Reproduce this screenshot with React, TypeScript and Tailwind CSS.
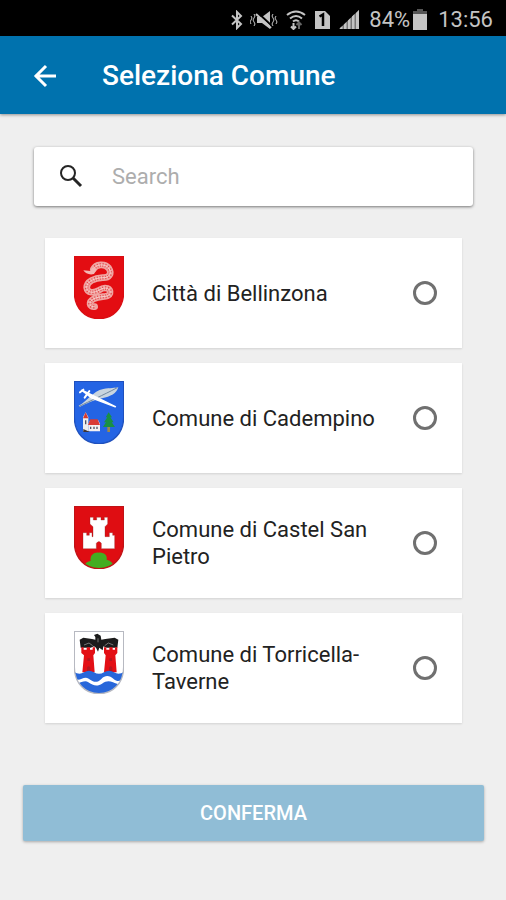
import { useState } from 'react';
import type { ReactNode } from 'react';

const SHIELD = 'M1 1H149V108C149 158 116 188 75 188S1 158 1 108Z';

function Shield({ id, fill, stroke, children }: { id: string; fill: string; stroke: string; children: ReactNode }) {
  return (
    <svg viewBox="0 0 150 189" className="h-[63px] w-[50px] shrink-0" aria-hidden="true">
      <clipPath id={id}>
        <path d={SHIELD} />
      </clipPath>
      <g clipPath={`url(#${id})`}>
        <path d={SHIELD} fill={fill} />
        {children}
      </g>
      <path d={SHIELD} fill="none" stroke={stroke} strokeWidth="4" />
    </svg>
  );
}

function BellinzonaShield() {
  const body =
    'M58 40C66 24 92 22 104 36C116 54 104 66 86 65C62 66 38 76 38 95C40 112 60 112 76 102C94 90 112 98 108 112C104 126 80 118 60 128C42 138 46 154 62 152';
  return (
    <Shield id="bellinzona" fill="#e30d12" stroke="#d90d12">
      <path d={body} fill="none" stroke="#f0a5a2" strokeWidth="20" strokeLinecap="round" strokeLinejoin="round" />
      <path d={body} fill="none" stroke="#e3474a" strokeWidth="11" strokeDasharray="3 5" />
      <path d={body} fill="none" stroke="#f8cfcb" strokeWidth="3" />
      <path d="M28 43L50 45L54 34L68 40L60 54C46 58 34 52 28 43Z" fill="#f3b7b4" />
      <path d="M66 52L88 50L84 44Z" fill="#e30d12" />
    </Shield>
  );
}

function CadempinoShield() {
  return (
    <Shield id="cadempino" fill="#2464e4" stroke="#1f50bd">
      <path d="M14 74C42 60 56 30 88 24C108 20 124 22 133 18C128 38 110 46 84 52C56 58 38 68 18 77Z" fill="#c9d5df" />
      <path d="M16 76C48 60 84 44 130 20" fill="none" stroke="#71889f" strokeWidth="3" />
      <path d="M24 28L124 77L52 50Z" fill="#fff" stroke="#fff" strokeWidth="5" strokeLinejoin="round" />
      <path d="M18 34L28 26M32 50L46 30" stroke="#fff" strokeWidth="6" strokeLinecap="round" />
      <path d="M27 108L35 94L43 108V151H27Z" fill="#eee" />
      <path d="M27 112L35 94L43 112Z" fill="#d7392f" />
      <path d="M43 129L49 117H72L78 128V151H43Z" fill="#f4f1f2" />
      <path d="M42 132L49 115H71L78 132Z" fill="#d93a35" />
      <path d="M50 137V144M60 137V144M69 137V144M35 118V130" stroke="#4e5264" strokeWidth="4" />
      <path d="M28 144L48 153H28Z" fill="#3f3435" />
      <path d="M104 132V153" stroke="#a08a48" strokeWidth="8" />
      <path d="M104 94L114 109H109L119 124H113L123 138H87L96 124H90L100 109H95Z" fill="#199044" />
    </Shield>
  );
}

function CastelShield() {
  return (
    <Shield id="castel" fill="#df0d12" stroke="#c01216">
      <path
        d="M48 34H58V42H68V34H81V42H91V34H101V54L93 62V92H106V80H116V88H122V128H82V112Q75 101 67 112V128H27V80H38V88H46V80H54V92H57V62L48 54Z"
        fill="#fff"
        stroke="#8d2724"
        strokeWidth="1"
      />
      <path d="M31 189C29 174 39 166 50 165C47 147 61 138 74 140C91 138 101 150 98 161C111 163 120 174 120 189Z" fill="#43ad21" />
    </Shield>
  );
}

function TorricellaShield() {
  return (
    <Shield id="torricella" fill="#fff" stroke="#b7b9c1">
      <path
        d="M17 26L28 20L54 24L64 26L64 18L60 12L70 8L80 14L82 26L94 24L122 20L133 26L130 50H98L88 46L86 58L76 50L72 62L66 50L60 46L50 50H20Z"
        fill="#1b1b1b"
      />
      <path d="M30 42L45 36L56 44M92 44L103 36L118 42M72 22V34" fill="none" stroke="#777" strokeWidth="3" />
      <path d="M22 49H29V56H38V49H48V56H56V49H63V66L58 73L62 124H25L30 73L22 66Z" fill="#e30f15" />
      <path d="M90 49H97V56H106V49H116V56H123V49H130V66L124 73L128 124H90L95 73L90 66Z" fill="#e30f15" />
      <path d="M40 82H48V90H40ZM106 82H114V90H106ZM39 124V110Q44 102 49 110V124ZM105 124V110Q110 102 115 110V124Z" fill="#b5161f" />
      <path d="M0 122Q15 133 30 124T60 124T90 124T120 124T150 122V189H0Z" fill="#2867da" />
      <path d="M0 142C17 155 29 132 44 143S69 157 82 144S107 134 119 144S138 151 150 142V154C138 163 129 159 117 154S97 149 84 158S56 164 43 154S18 162 0 154Z" fill="#fff" />
    </Shield>
  );
}

const comuni = [
  { id: 'bellinzona', name: 'Città di Bellinzona', shield: <BellinzonaShield /> },
  { id: 'cadempino', name: 'Comune di Cadempino', shield: <CadempinoShield /> },
  { id: 'castel', name: 'Comune di Castel San Pietro', shield: <CastelShield /> },
  { id: 'torricella', name: 'Comune di Torricella-Taverne', shield: <TorricellaShield /> },
];

function StatusBar() {
  return (
    <div className="flex h-9 items-center justify-end bg-black pt-1 pr-3 text-[#c4c4c4]">
      <svg viewBox="0 0 14 20" className="mr-1.5 h-5 w-3.5" fill="none" stroke="currentColor" strokeWidth="2" aria-hidden="true">
        <path d="M2 5.5L11 14L7 18V2L11 6L2 14.5" />
      </svg>
      <svg viewBox="0 0 28 20" className="mr-2 h-5 w-7" fill="currentColor" aria-hidden="true">
        <path d="M7 7H12L20 1V19L12 13H7Z" />
        <path d="M7 2L22 16" stroke="#000" strokeWidth="2" />
        <path d="M6 4L21 18" stroke="currentColor" strokeWidth="2" />
        <path
          d="M4 4Q6 6 4 8T4 12T4 16M1 6Q3 8 1 10T1 14M23 4Q21 6 23 8T23 12T23 16M26 6Q24 8 26 10T26 14"
          fill="none"
          stroke="currentColor"
        />
      </svg>
      <svg viewBox="0 0 20 20" className="mr-2 h-5 w-5" fill="none" stroke="currentColor" strokeWidth="2" aria-hidden="true">
        <path d="M1 5Q10 -2 19 5M4 8.5Q10 3.5 16 8.5M7 11.5Q10 9 13 11.5" />
        <path d="M7.5 13V19M5 16.5L7.5 19L10 16.5" />
        <path d="M13 19V13M10.5 15L13 12.5L15.5 15" stroke="#666" />
      </svg>
      <svg viewBox="0 0 17 20" className="mr-2 h-5 w-[17px]" aria-hidden="true">
        <path d="M1 1H11L16 6V19H1Z" fill="currentColor" />
        <path d="M5.5 6.5L9 4.5V16" fill="none" stroke="#000" strokeWidth="2.5" />
      </svg>
      <svg viewBox="0 0 20 20" className="mr-2.5 h-5 w-5" aria-hidden="true">
        <path d="M0 19L20 0V19Z" fill="#777" />
        <path d="M1 19V18L3.5 16V19ZM5 19V14.5L7.5 12V19ZM9 19V10.5L11.5 8V19ZM13 19V6.5L15.5 4V19ZM17 19V3L20 0V19Z" fill="currentColor" />
      </svg>
      <span className="text-[22px] leading-6">84%</span>
      <svg viewBox="0 0 16 22" className="mr-2.5 ml-0.5 h-[22px] w-4" aria-hidden="true">
        <path d="M5 0H11V2H15V5H1V2H5Z" fill="#555" />
        <path d="M1 5H15V21H1Z" fill="currentColor" />
      </svg>
      <span className="mr-px text-[22px] leading-6">13:56</span>
    </div>
  );
}

export default function App() {
  const [search, setSearch] = useState('');
  const [selected, setSelected] = useState('');

  const visible = comuni.filter((c) => c.name.toLowerCase().includes(search.toLowerCase()));

  return (
    <div className="min-h-screen bg-[#efefef] font-[Roboto,sans-serif]">
      <StatusBar />
      <header className="flex h-[78px] items-center bg-[#0072ae] pt-0.5 pl-[33px] text-white shadow-[0_1px_3px_rgba(0,0,0,0.4)]">
        <button type="button" aria-label="Indietro" className="mr-[45px]">
          <svg viewBox="0 0 24 24" className="h-6 w-6" fill="none" stroke="currentColor" strokeWidth="3" aria-hidden="true">
            <path d="M13 2L3 12L13 22M2 12H23" />
          </svg>
        </button>
        <h1 className="text-[28px] leading-8 font-medium">Seleziona Comune</h1>
      </header>

      <main>
        <label className="mr-[33px] ml-[34px] mt-[33px] flex h-[59px] items-center rounded-[3px] bg-white px-[26px] shadow-[0_1px_3px_rgba(0,0,0,0.5)]">
          <svg viewBox="0 0 24 24" className="mr-7 h-6 w-6 shrink-0" fill="none" stroke="#252525" aria-hidden="true">
            <circle cx="8" cy="8" r="7" strokeWidth="2" />
            <path d="M13 13L21 21" strokeWidth="3" />
          </svg>
          <input
            type="text"
            aria-label="Search"
            placeholder="Search"
            value={search}
            onChange={(e) => setSearch(e.target.value)}
            className="w-full min-w-0 text-[22px] leading-7 text-[#222] outline-none placeholder:text-[#adadad]"
          />
        </label>

        <div role="radiogroup" aria-label="Comune" className="mt-8 mr-11 ml-[45px] flex flex-col gap-[15px]">
          {visible.map((c) => (
            <label key={c.id} className="flex h-[110px] items-center bg-white pr-[25px] pl-[29px] shadow-[0_1px_2px_rgba(0,0,0,0.12)]">
              <span className="mb-3">{c.shield}</span>
              <span className="ml-7 flex-1 pr-6 text-[22px] leading-[27px] text-[#222]">{c.name}</span>
              <input
                type="radio"
                name="comune"
                value={c.id}
                checked={selected === c.id}
                onChange={() => setSelected(c.id)}
                className="h-6 w-6 shrink-0 appearance-none rounded-full border-3 border-[#707070] checked:border-[7px] checked:border-[#0072ae]"
              />
            </label>
          ))}
        </div>

        <div className="mr-[22px] ml-[23px] mt-[62px] pb-14">
          <button
            type="button"
            className="h-14 w-full rounded-[2px] bg-[#90bdd6] text-[20px] leading-6 font-medium text-white shadow-[0_1px_3px_rgba(0,0,0,0.3)]"
          >
            CONFERMA
          </button>
        </div>
      </main>
    </div>
  );
}
